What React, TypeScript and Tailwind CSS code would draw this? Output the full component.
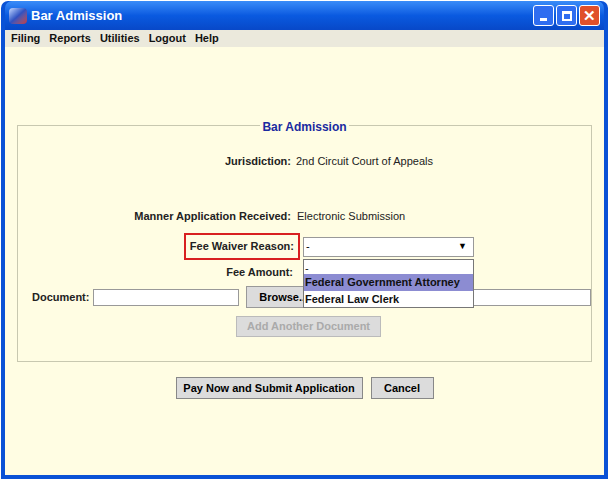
import React from "react"

const lbl = "text-[11px] font-bold text-[#222]"

export default function App() {
  return (
    <div className="w-[609px] h-[480px] bg-white p-[1px]" style={{ fontFamily: "'Liberation Sans', Arial, sans-serif" }}>
      <div className="flex h-full flex-col rounded-t-[7px] bg-[#0a52d6] px-[4px] pb-[4px]">
        <div className="flex h-[29px] items-center gap-1 bg-gradient-to-b from-[#3a8cf8] via-[#0a5ae0] to-[#0848c8] rounded-t-[7px] px-1">
          <div className="h-[16px] w-[18px] rounded-sm bg-gradient-to-br from-[#c8d8ff] via-[#3050c0] to-[#c03040]" />
          <span className="text-[13px] font-bold text-white">Bar Admission</span>
          <div className="ml-auto flex gap-[2px]">
            <div className="flex h-[21px] w-[21px] items-end justify-center rounded-[3px] border border-white bg-[#2f6df0] pb-[4px]"><div className="h-[3px] w-[7px] bg-white" /></div>
            <div className="flex h-[21px] w-[21px] items-center justify-center rounded-[3px] border border-white bg-[#2f6df0]"><div className="h-[10px] w-[10px] border-2 border-t-[3px] border-white" /></div>
            <div className="flex h-[21px] w-[21px] items-center justify-center rounded-[3px] border border-white bg-[#e0502a] text-[15px] font-bold leading-none text-white">✕</div>
          </div>
        </div>
        <div className="flex h-[17px] items-center gap-[9px] bg-[#ebe9dc] px-[6px] text-[11px] font-bold text-[#111]">
          <span>Filing</span><span>Reports</span><span>Utilities</span><span>Logout</span><span>Help</span>
        </div>
        <div className="relative flex-1 bg-[#fffde3] px-[12px] pt-[78px]">
          <div className="relative h-[237px] border border-[#c8c8b0] pt-[28px]">
            <div className="absolute -top-[8px] left-0 right-0 flex justify-center">
              <span className="bg-[#fffde3] px-[2px] text-[12px] font-bold text-[#1a2aa0]">Bar Admission</span>
            </div>
            <div className="flex h-[14px] items-center">
              <div className={`w-[273px] text-right ${lbl}`}>Jurisdiction:</div>
              <div className="ml-[5px] text-[11px] text-[#222]">2nd Circuit Court of Appeals</div>
            </div>
            <div className="mt-[41px] flex h-[14px] items-center">
              <div className={`w-[273px] text-right ${lbl}`}>Manner Application Received:</div>
              <div className="ml-[6px] text-[11px] text-[#222]">Electronic Submission</div>
            </div>
            <div className="mt-[10px] flex h-[27px] items-center">
              <div className="ml-[166px] flex h-[27px] w-[116px] items-center justify-end border-2 border-[#d82020] pr-[4px]"><span className={lbl}>Fee Waiver Reason:</span></div>
              <div className="relative ml-[3px] flex h-[20px] w-[171px] items-center border border-[#999] bg-white px-[2px] text-[11px]">
                -
                <span className="ml-auto mr-[4px] text-[9px]">▼</span>
                <div className="absolute left-[-1px] top-[21px] z-10 w-[171px] border border-[#777] bg-white text-[11px] font-bold text-[#111]">
                  <div className="h-[14px] px-[1px] font-normal">-</div>
                  <div className="h-[17px] bg-[#8c8cd2] px-[1px] leading-[17px]">Federal Government Attorney</div>
                  <div className="h-[16px] px-[1px] leading-[16px]">Federal Law Clerk</div>
                </div>
              </div>
            </div>
            <div className="mt-[1px] flex h-[22px] items-center">
              <div className={`w-[275px] text-right ${lbl}`}>Fee Amount:</div>
            </div>
            <div className="mt-[3px] flex h-[22px] items-center">
              <div className={`ml-[14px] ${lbl}`}>Document:</div>
              <div className="ml-[4px] h-[17px] w-[146px] border border-[#999] bg-white" />
              <div className="ml-[7px] flex h-[22px] w-[75px] items-center justify-center border border-[#999] bg-[#dcdcdc] text-[11px] font-bold">Browse...</div>
              <div className={`ml-[5px] ${lbl}`}>Description:</div>
              <div className="ml-[4px] h-[17px] w-[197px] border border-[#999] bg-white" />
            </div>
            <div className="mt-[8px] flex justify-center">
              <div className="ml-[8px] flex h-[21px] w-[145px] items-center justify-center border border-[#bbb] bg-[#dcdcdc] text-[11px] font-bold text-[#aaa]">Add Another Document</div>
            </div>
          </div>
          <div className="mt-[15px] flex justify-center gap-[8px]">
            <div className="flex h-[22px] w-[187px] items-center justify-center border border-[#888] bg-[#dcdcdc] text-[11px] font-bold">Pay Now and Submit Application</div>
            <div className="flex h-[22px] w-[63px] items-center justify-center border border-[#888] bg-[#dcdcdc] text-[11px] font-bold">Cancel</div>
          </div>
        </div>
      </div>
    </div>
  )
}
